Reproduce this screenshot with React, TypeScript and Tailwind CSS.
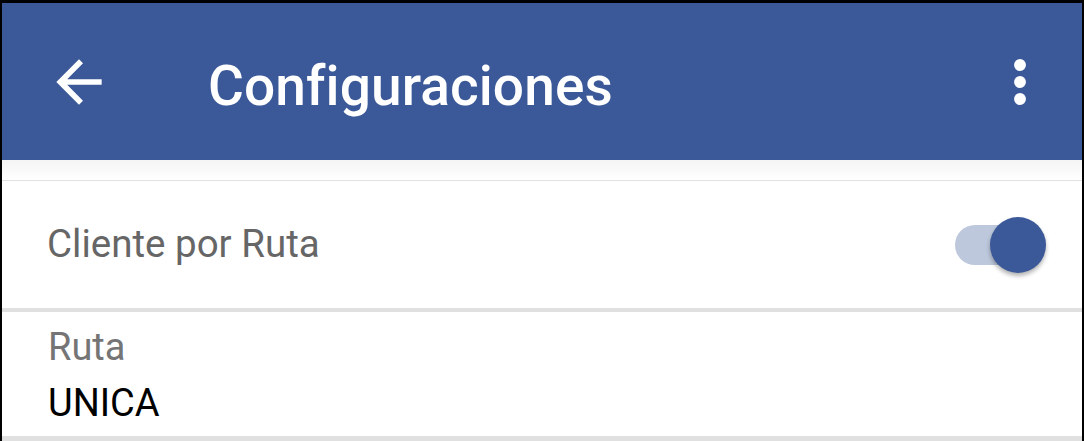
import React from 'react';

function BackArrow() {
  return (
    <svg viewBox="0 0 24 24" className="w-[68px] h-[68px]" fill="#ffffff">
      <path d="M20 11H7.83l5.59-5.59L12 4l-8 8 8 8 1.41-1.41L7.83 13H20v-2z" />
    </svg>
  );
}

function MoreVert() {
  return (
    <svg viewBox="0 0 24 24" className="w-[68px] h-[68px]" fill="#ffffff">
      <circle cx="12" cy="6" r="2.1" />
      <circle cx="12" cy="12" r="2.1" />
      <circle cx="12" cy="18" r="2.1" />
    </svg>
  );
}

function Toggle() {
  return (
    <div className="relative w-[92px] h-[58px] flex items-center">
      <div className="w-[82px] h-[40px] rounded-full bg-[#bdc8dc]" />
      <div className="absolute left-[35px] top-[1px] w-[56px] h-[56px] rounded-full bg-[#3b5998] shadow-[0_3px_4px_rgba(0,0,0,0.3)]" />
    </div>
  );
}

export default function App() {
  return (
    <div className="w-[1084px] h-[441px] bg-black pt-[3px] pl-[2px] overflow-hidden" style={{ fontFamily: 'Roboto, "Noto Sans", sans-serif' }}>
      <div className="w-[1080px] h-[438px] bg-white flex flex-col">
        {/* Toolbar */}
        <div className="h-[157px] bg-[#3b5998] flex items-center shrink-0">
          <div className="w-[68px] ml-[43px] flex items-center justify-center">
            <BackArrow />
          </div>
          <h1 className="ml-[95px] mt-[10px] text-white text-[55px] font-medium leading-none tracking-[0.1px]">Configuraciones</h1>
          <div className="ml-auto mr-[28px] flex items-center">
            <MoreVert />
          </div>
        </div>

        <div className="h-[20px] shrink-0 bg-gradient-to-b from-[#f4f4f4] to-white" />
        <div className="h-[1px] bg-[#e2e2e2] shrink-0" />

        {/* Cliente por Ruta */}
        <div className="h-[127px] shrink-0 flex items-center pl-[45px] pr-[35px]">
          <span className="text-[38.5px] text-[#666666] leading-none">Cliente por Ruta</span>
          <div className="ml-auto">
            <Toggle />
          </div>
        </div>

        <div className="h-[4px] bg-[#e0e0e0] shrink-0" />

        {/* Ruta */}
        <div className="h-[124px] shrink-0 flex flex-col pl-[46px] pt-[13px]">
          <span className="text-[38px] text-[#757575] leading-[44px]">Ruta</span>
          <span className="text-[38px] text-black leading-[44px] mt-[12px]">UNICA</span>
        </div>

        <div className="h-[5px] bg-[#e0e0e0] shrink-0" />
      </div>
    </div>
  );
}
